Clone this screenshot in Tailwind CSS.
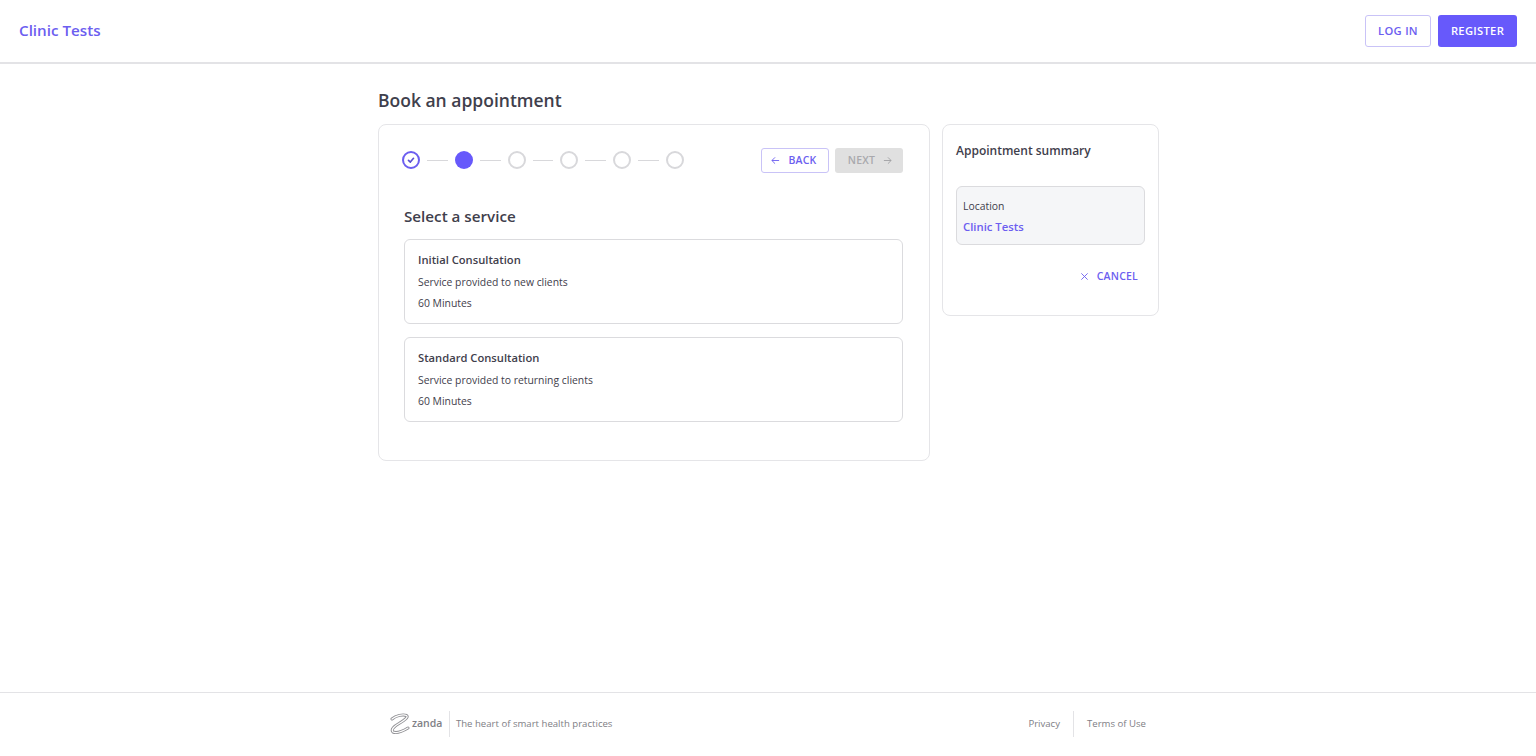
<!DOCTYPE html>
<html lang="en">
<head>
  <meta charset="UTF-8" />
  <meta name="viewport" content="width=device-width, initial-scale=1.0"/>
  <title>Clinic Tests - Book an appointment</title>
  <script src="https://cdn.jsdelivr.net/npm/@tailwindcss/browser@4"></script>
</head>
<body class="bg-white text-[#3f404c] font-['Open_Sans',sans-serif]">
  <div class="flex flex-col h-[756px] overflow-hidden">
    <header class="h-[64px] shrink-0 flex items-center justify-between px-[19px] border-b-2 border-[#e3e3e6]">
      <a class="text-[15.2px] leading-[20px] mb-[2px] font-semibold text-[#6c5ef0]">Clinic Tests</a>
      <div class="flex gap-[7px]">
        <button class="w-[66px] h-[32px] rounded-[3px] border border-[#c9c3f7] bg-white text-[11.2px] font-semibold tracking-[0.3px] text-[#6c5ef0]">LOG IN</button>
        <button class="w-[79px] h-[32px] rounded-[3px] bg-[#6759fb] text-[11.2px] font-semibold tracking-[0.3px] text-white">REGISTER</button>
      </div>
    </header>

    <main class="flex-1 w-[781px] ml-[378px] pt-[24px]">
      <h1 class="text-[17.5px] leading-[25px] font-semibold mb-[11px]">Book an appointment</h1>
      <div class="flex items-start gap-[12px]">
        <section class="w-[552px] h-[337px] shrink-0 rounded-[8px] border border-[#e5e5e8] pl-[25px] pr-[26px] pt-[22px]">
          <div class="flex items-center justify-between h-[26px]">
            <div class="flex items-center -ml-[1.7px]">
              <span class="w-[18px] h-[18px] rounded-full border-2 border-[#6c5ef0] flex items-center justify-center">
                <svg class="w-[10px] h-[10px]" viewBox="0 0 12 12" fill="none" stroke="#5a4fd0" stroke-width="2" stroke-linecap="round" stroke-linejoin="round"><path d="M3 6.500 5.200 8.500 9 4"/></svg>
              </span>
              <span class="w-[20.7px] h-[1px] bg-[#d8d8db] mx-[7px]"></span>
              <span class="w-[18px] h-[18px] rounded-full bg-[#6759fb]"></span>
              <span class="w-[20.7px] h-[1px] bg-[#d8d8db] mx-[7px]"></span>
              <span class="w-[18px] h-[18px] rounded-full border-2 border-[#d8d8db]"></span>
              <span class="w-[20.7px] h-[1px] bg-[#d8d8db] mx-[7px]"></span>
              <span class="w-[18px] h-[18px] rounded-full border-2 border-[#d8d8db]"></span>
              <span class="w-[20.7px] h-[1px] bg-[#d8d8db] mx-[7px]"></span>
              <span class="w-[18px] h-[18px] rounded-full border-2 border-[#d8d8db]"></span>
              <span class="w-[20.7px] h-[1px] bg-[#d8d8db] mx-[7px]"></span>
              <span class="w-[18px] h-[18px] rounded-full border-2 border-[#d8d8db]"></span>
            </div>
            <div class="flex gap-[6px]">
              <button class="w-[68px] h-[25px] rounded-[3px] border border-[#c9c3f7] bg-white flex items-center justify-center gap-[8px] pr-[2px] pt-[1px] text-[10.5px] font-semibold tracking-[0.2px] text-[#6c5ef0]">
                <svg class="w-[9px] h-[9px]" viewBox="0 0 10 10" fill="none" stroke="#6c5ef0" stroke-width="1"><path d="M9 5H1M4.500 1.500 1 5l3.500 3.500"/></svg>
                BACK
              </button>
              <button class="w-[68px] h-[25px] rounded-[3px] bg-[#e0e0e0] flex items-center justify-center gap-[8px] pl-[2px] pt-[1px] text-[10.5px] font-semibold tracking-[0.2px] text-[#a9a9ad]">
                NEXT
                <svg class="w-[9px] h-[9px]" viewBox="0 0 10 10" fill="none" stroke="#a0a0a4" stroke-width="1"><path d="M1 5h8M5.500 1.500 9 5 5.500 8.500"/></svg>
              </button>
            </div>
          </div>

          <h2 class="text-[15.2px] leading-[20px] font-semibold mt-[33px] mb-[13px]">Select a service</h2>

          <div class="flex flex-col gap-[13px]">
            <article class="h-[85px] rounded-[6px] border border-[#dbdbde] px-[13px] pt-[11px]">
              <h3 class="text-[11.2px] leading-[17px] font-semibold">Initial Consultation</h3>
              <p class="text-[10.4px] leading-[15px] mt-[7px]">Service provided to new clients</p>
              <p class="text-[10.4px] leading-[15px] mt-[6px]">60 Minutes</p>
            </article>
            <article class="h-[85px] rounded-[6px] border border-[#dbdbde] px-[13px] pt-[11px]">
              <h3 class="text-[11.2px] leading-[17px] font-semibold">Standard Consultation</h3>
              <p class="text-[10.4px] leading-[15px] mt-[7px]">Service provided to returning clients</p>
              <p class="text-[10.4px] leading-[15px] mt-[6px]">60 Minutes</p>
            </article>
          </div>
        </section>

        <aside class="w-[217px] h-[192px] shrink-0 rounded-[8px] border border-[#e5e5e8] px-[13px] pt-[17px]">
          <h2 class="text-[12px] leading-[18px] font-semibold">Appointment summary</h2>
          <div class="mt-[26px] h-[59px] rounded-[6px] border border-[#dbdbde] bg-[#f5f6f8] px-[6px] pt-[12px]">
            <p class="text-[10.4px] leading-[15px]">Location</p>
            <p class="text-[11.3px] leading-[17px] font-semibold text-[#6c5ef0] mt-[4px]">Clinic Tests</p>
          </div>
          <div class="flex justify-end items-center gap-[8px] mt-[24px] pr-[7px] text-[10.5px] leading-[15px] font-semibold tracking-[0.2px] text-[#6c5ef0]">
            <svg class="w-[9px] h-[9px]" viewBox="0 0 10 10" fill="none" stroke="#6c5ef0" stroke-width="1"><path d="M1.500 1.500l7 7M8.500 1.500l-7 7"/></svg>
            CANCEL
          </div>
        </aside>
      </div>
    </main>

    <footer class="h-[64px] shrink-0 border-t border-[#e3e3e6]">
      <div class="w-[781px] flex items-center justify-between ml-[378px] pt-[18px] pl-[12px] pr-[13px] text-[9.6px] text-[#808086]">
        <div class="flex items-center h-[26px]">
          <svg class="w-[20px] h-[22px] mr-[2px]" viewBox="0 0 20 22" fill="none" stroke-linecap="round" stroke-linejoin="round">
            <path stroke="#8f8f93" stroke-width="3" d="M2 6C6 2.500 13 1 16.500 2.500 19 4 14 7.500 9 10.500 4.500 13 .5 16.500 3 19 6.500 20.500 13 18 18 15"/>
            <path stroke="#ffffff" stroke-width="1.200" d="M2 6C6 2.500 13 1 16.500 2.500 19 4 14 7.500 9 10.500 4.500 13 .5 16.500 3 19 6.500 20.500 13 18 18 15"/>
          </svg>
          <span class="text-[10.500px] font-semibold pr-[7px]">zanda</span>
          <span class="h-[26px] border-l border-[#e3e3e6] pl-[5.5px] flex items-center">The heart of smart health practices</span>
        </div>
        <div class="flex items-center h-[26px]">
          <a class="pr-[13px]">Privacy</a>
          <a class="h-[26px] border-l border-[#e3e3e6] pl-[13px] flex items-center">Terms of Use</a>
        </div>
      </div>
    </footer>
  </div>
</body>
</html>
